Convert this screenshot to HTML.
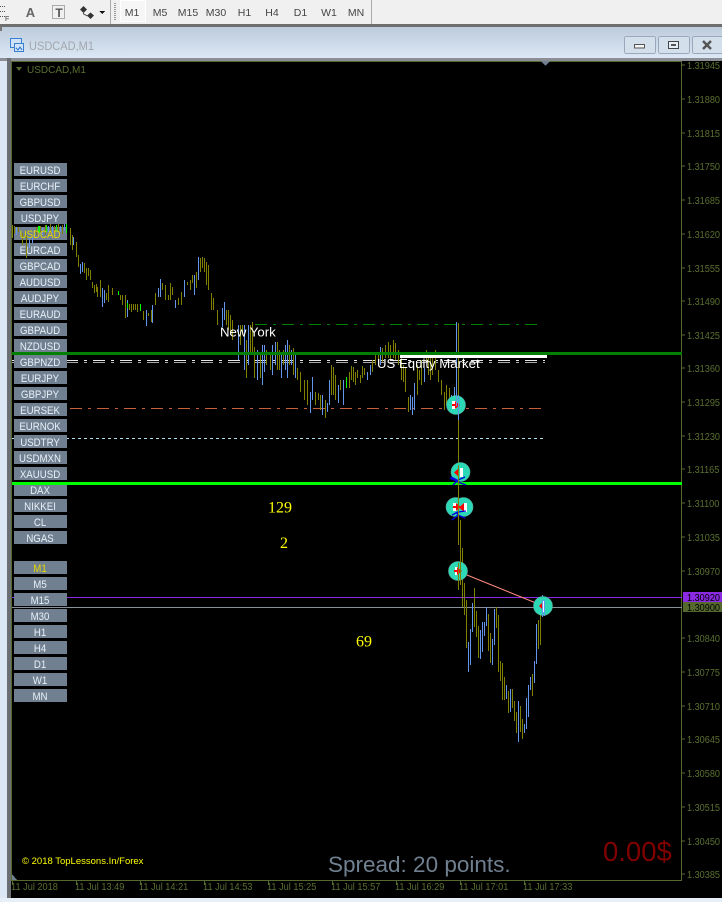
<!DOCTYPE html>
<html><head><meta charset="utf-8"><style>
html,body{margin:0;padding:0;background:#000;width:722px;height:902px;overflow:hidden}
svg{display:block;font-family:"Liberation Sans",sans-serif}
.b text{font-size:11px;fill:#e8f0f8;text-anchor:middle}
.p text{font-size:10.5px;fill:#5a7030}
.t text{font-size:10px;fill:#5a7030}
.tb text{font-size:10.5px;fill:#444;text-anchor:middle}
</style></head><body>
<svg width="722" height="902" viewBox="0 0 722 902" xmlns="http://www.w3.org/2000/svg" shape-rendering="crispEdges">
<defs><linearGradient id="g" x1="0" y1="0" x2="0" y2="1"><stop offset="0" stop-color="#bccbdb"/><stop offset="1" stop-color="#dbe7f4"/></linearGradient></defs>
<rect width="722" height="24" fill="#f0f0f0"/>
<rect y="24" width="722" height="3" fill="#6e6e6e"/>
<rect y="27" width="722" height="31" fill="url(#g)"/>
<rect y="58" width="722" height="844" fill="#dbe7f4"/>
<rect y="58" width="722" height="3" fill="#8b8f95"/>
<rect x="7" y="58" width="4" height="840" fill="#6b6f73"/>
<rect x="11" y="61" width="711" height="837" fill="#000"/>
<rect y="898" width="722" height="4" fill="#e6eef7"/>
<rect x="0" y="27" width="2" height="4" fill="#777"/>

<!-- toolbar -->
<g fill="none" stroke="#555"><path d="M0 6.500H6M0 11.500H6M0 16.500H6" stroke-dasharray="1 1"/></g>
<text x="5" y="21" font-size="7" fill="#444">F</text>
<text x="30.500" y="17" font-size="13" font-weight="bold" fill="#666" text-anchor="middle">A</text>
<rect x="52.500" y="5.500" width="12" height="13" fill="none" stroke="#666" stroke-dasharray="1 1"/>
<text x="59" y="17" font-size="12" font-weight="bold" fill="#555" text-anchor="middle">T</text>
<g shape-rendering="auto"><path d="M80 9.500l3.500-3.500 3.500 3.500-3.500 3.500zM87 15.500l3.500-3 3.500 3-3.500 3.500z" fill="#333"/>
<path d="M83.500 12v2l4 2" stroke="#555" fill="none"/></g>
<path d="M99 11h6l-3 3z" fill="#111"/>
<rect x="110" y="0" width="1" height="24" fill="#aaa"/>
<path d="M115 3v18" stroke="#999" stroke-width="2" stroke-dasharray="1 1"/>
<rect x="120.500" y="0.500" width="25" height="21" fill="#f6f6f6" stroke="#fff"/>
<rect x="371" y="0" width="1" height="24" fill="#aaa"/>
<g class="tb"><text x="132" y="16">M1</text><text x="160" y="16">M5</text><text x="188" y="16">M15</text><text x="216" y="16">M30</text><text x="244.500" y="16">H1</text><text x="272" y="16">H4</text><text x="300.500" y="16">D1</text><text x="329" y="16">W1</text><text x="356" y="16">MN</text></g>

<!-- title -->
<g fill="#cfe2f7" stroke="#3a80d0"><rect x="10.500" y="38.500" width="11" height="9"/><rect x="14.500" y="43.500" width="9" height="8"/></g>
<path d="M16 48l2 2 2-3 2 3" stroke="#3a80d0" fill="none"/>
<text x="29" y="50" font-size="12" fill="#a2a6ad" textLength="65" lengthAdjust="spacingAndGlyphs">USDCAD,M1</text>
<g fill="#d4dfec" stroke="#9aa8bb"><rect x="624.500" y="36.500" width="31" height="17" rx="2"/><rect x="658.500" y="36.500" width="31" height="17" rx="2"/><rect x="692.500" y="36.500" width="40" height="17" rx="2"/></g>
<rect x="634.500" y="44.500" width="10" height="3.500" fill="#f4f4f4" stroke="#555"/>
<rect x="668.500" y="41.500" width="10" height="7" fill="#e8eef5" stroke="#444"/><rect x="671" y="44" width="5" height="2" fill="#555"/>
<g shape-rendering="auto"><path d="M703 41l8 8M711 41l-8 8" stroke="#555" stroke-width="2.500"/></g>

<!-- chart frame -->
<path d="M11.500 61.500H681.500V880.500H11.500Z" fill="#000" stroke="#55692f"/>
<path d="M682 65h3M682 99h3M682 133h3M682 166h3M682 200h3M682 234h3M682 268h3M682 301h3M682 335h3M682 368h3M682 402h3M682 436h3M682 469h3M682 503h3M682 537h3M682 571h3M682 638h3M682 672h3M682 706h3M682 739h3M682 773h3M682 807h3M682 841h3M682 874h3" stroke="#55692f"/>
<path d="M12.500 881v4M76.500 881v4M140.500 881v4M204.500 881v4M268.500 881v4M332.500 881v4M396.500 881v4M460.500 881v4M524.500 881v4" stroke="#55692f"/>
<g class="p" transform="translate(687,0) scale(.87,1)"><text x="0" y="69">1.31945</text><text x="0" y="103">1.31880</text><text x="0" y="137">1.31815</text><text x="0" y="170">1.31750</text><text x="0" y="204">1.31685</text><text x="0" y="238">1.31620</text><text x="0" y="272">1.31555</text><text x="0" y="305">1.31490</text><text x="0" y="339">1.31425</text><text x="0" y="372">1.31360</text><text x="0" y="406">1.31295</text><text x="0" y="440">1.31230</text><text x="0" y="473">1.31165</text><text x="0" y="507">1.31100</text><text x="0" y="541">1.31035</text><text x="0" y="575">1.30970</text><text x="0" y="642">1.30840</text><text x="0" y="676">1.30775</text><text x="0" y="710">1.30710</text><text x="0" y="743">1.30645</text><text x="0" y="777">1.30580</text><text x="0" y="811">1.30515</text><text x="0" y="845">1.30450</text><text x="0" y="878">1.30385</text></g>
<g class="t" transform="scale(.92,1)"><text x="12" y="890">11 Jul 2018</text><text x="81.500" y="890">11 Jul 13:49</text><text x="151" y="890">11 Jul 14:21</text><text x="220.700" y="890">11 Jul 14:53</text><text x="290.200" y="890">11 Jul 15:25</text><text x="359.800" y="890">11 Jul 15:57</text><text x="429.300" y="890">11 Jul 16:29</text><text x="498.900" y="890">11 Jul 17:01</text><text x="568.500" y="890">11 Jul 17:33</text></g>
<path d="M16 67h6l-3 4z" fill="#55692f"/>
<text x="27" y="73" font-size="10" fill="#5a7030">USDCAD,M1</text>
<path d="M541 61h9l-4.500 5z" fill="#708090"/>
<path d="M12 874l5 6h-5z" fill="#708090"/>

<!-- price lines -->
<rect x="12" y="597" width="670" height="1" fill="#8a2be2"/>
<rect x="12" y="607" width="670" height="1" fill="#8a9099"/>

<!-- dashed levels -->
<path d="M255 324.500H540" stroke="#008000" stroke-dasharray="12 6 3 6" fill="none"/>
<path d="M12 360.500H545" stroke="#e8e8e8" stroke-dasharray="12 6 3 6" fill="none"/>
<path d="M12 362.500H545" stroke="#a8a8a8" stroke-dasharray="12 6 3 6" fill="none"/>
<path d="M70 408.500H545" stroke="#c8603a" stroke-dasharray="12 6 3 6" fill="none"/>
<path d="M12 438.500H543" stroke="#b0e0f0" stroke-dasharray="3 3" fill="none"/>

<!-- buttons -->
<g fill="#708090"><rect x="14" y="163" width="53" height="13"/><rect x="14" y="179" width="53" height="13"/><rect x="14" y="195" width="53" height="13"/><rect x="14" y="211" width="53" height="13"/><rect x="14" y="227" width="53" height="13"/><rect x="14" y="243" width="53" height="13"/><rect x="14" y="259" width="53" height="13"/><rect x="14" y="275" width="53" height="13"/><rect x="14" y="291" width="53" height="13"/><rect x="14" y="307" width="53" height="13"/><rect x="14" y="323" width="53" height="13"/><rect x="14" y="339" width="53" height="13"/><rect x="14" y="355" width="53" height="13"/><rect x="14" y="371" width="53" height="13"/><rect x="14" y="387" width="53" height="13"/><rect x="14" y="403" width="53" height="13"/><rect x="14" y="419" width="53" height="13"/><rect x="14" y="435" width="53" height="13"/><rect x="14" y="451" width="53" height="13"/><rect x="14" y="467" width="53" height="13"/><rect x="14" y="483" width="53" height="13"/><rect x="14" y="499" width="53" height="13"/><rect x="14" y="515" width="53" height="13"/><rect x="14" y="531" width="53" height="13"/><rect x="14" y="561" width="53" height="13"/><rect x="14" y="577" width="53" height="13"/><rect x="14" y="593" width="53" height="13"/><rect x="14" y="609" width="53" height="13"/><rect x="14" y="625" width="53" height="13"/><rect x="14" y="641" width="53" height="13"/><rect x="14" y="657" width="53" height="13"/><rect x="14" y="673" width="53" height="13"/><rect x="14" y="689" width="53" height="13"/></g>
<g class="b" transform="scale(.88,1)"><text x="45.500" y="174">EURUSD</text><text x="45.500" y="190">EURCHF</text><text x="45.500" y="206">GBPUSD</text><text x="45.500" y="222">USDJPY</text><text x="45.500" y="254">EURCAD</text><text x="45.500" y="270">GBPCAD</text><text x="45.500" y="286">AUDUSD</text><text x="45.500" y="302">AUDJPY</text><text x="45.500" y="318">EURAUD</text><text x="45.500" y="334">GBPAUD</text><text x="45.500" y="350">NZDUSD</text><text x="45.500" y="366">GBPNZD</text><text x="45.500" y="382">EURJPY</text><text x="45.500" y="398">GBPJPY</text><text x="45.500" y="414">EURSEK</text><text x="45.500" y="430">EURNOK</text><text x="45.500" y="446">USDTRY</text><text x="45.500" y="462">USDMXN</text><text x="45.500" y="478">XAUUSD</text><text x="45.500" y="494">DAX</text><text x="45.500" y="510">NIKKEI</text><text x="45.500" y="526">CL</text><text x="45.500" y="542">NGAS</text><text x="45.500" y="588">M5</text><text x="45.500" y="604">M15</text><text x="45.500" y="620">M30</text><text x="45.500" y="636">H1</text><text x="45.500" y="652">H4</text><text x="45.500" y="668">D1</text><text x="45.500" y="684">W1</text><text x="45.500" y="700">MN</text></g>
<g transform="scale(.88,1)" font-size="11" fill="#e8d800" text-anchor="middle"><text x="45.500" y="572">M1</text></g>

<!-- bars -->
<path fill="none" stroke="#808000" d="M12.500 225V238M14.500 226V233M18.500 227V232M22.500 233V245M26.500 235V258M36.500 227V235M40.500 226V232M45.500 225V235M50.500 224V233M54.500 226V232M58.500 224V232M62.500 225V234M70.500 228V245M72.500 235V250M76.500 242V257M78.500 255V267M84.500 263V273M86.500 268V280M88.500 268V276M90.500 270V280M92.500 282V288M94.500 285V293M96.500 284V292M97.500 287V297M100.500 280V297M106.500 293V300M108.500 285V302M112.500 288V295M120.500 295V300M122.500 295V305M125.500 295V318M129.500 304V310M131.500 304V312M133.500 304V310M135.500 304V310M137.500 304V312M143.500 311V320M148.500 313V316M151.500 310V322M155.500 293V305M162.500 283V290M165.500 285V300M168.500 295V300M170.500 283V300M172.500 287V295M178.500 298V305M181.500 292V305M187.500 282V285M190.500 280V290M192.500 275V283M196.500 272V288M200.500 258V272M202.500 257V268M204.500 258V272M206.500 262V285M208.500 265V290M211.500 293V310M213.500 298V310M217.500 310V325M226.500 310V325M228.500 310V330M230.500 315V335M232.500 320V340M240.500 325V345M242.500 325V335M246.500 340V378M250.500 325V355M252.500 322V355M254.500 347V378M260.500 355V378M266.500 350V365M270.500 352V370M277.500 342V370M279.500 350V370M283.500 350V365M289.500 345V365M293.500 348V375M297.500 368V380M300.500 372V392M304.500 380V400M307.500 380V405M315.500 392V405M318.500 393V400M320.500 395V410M325.500 400V418M331.500 365V395M333.500 367V395M335.500 375V400M340.500 380V390M349.500 372V388M351.500 366V380M353.500 367V382M355.500 372V385M357.500 370V378M360.500 375V383M362.500 366V378M364.500 368V375M372.500 360V372M375.500 352V365M378.500 352V362M382.500 348V362M385.500 345V358M388.500 342V358M390.500 345V360M393.500 340V358M395.500 343V360M398.500 350V365M401.500 355V380M403.500 365V382M405.500 367V392M408.500 397V412M417.500 365V395M419.500 370V380M421.500 360V385M426.500 350V362M428.500 355V375M430.500 352V380M432.500 355V375M435.500 350V370M438.500 370V382M441.500 380V395M444.500 392V410M446.500 385V405M449.500 388V412M458.500 323V545M460.500 520V585M462.500 548V607M464.500 583V615M466.500 600V648M474.500 588V627M476.500 611V637M478.500 626V658M488.500 614V651M490.500 633V663M496.500 607V628M498.500 615V672M500.500 661V681M502.500 663V700M504.500 677V700M508.500 691V713M512.500 689V708M514.500 701V721M516.500 712V733M520.500 706V732M522.500 719V739M532.500 674V696M538.500 620V649M540.500 600V645"/>
<path fill="none" stroke="#6495ed" d="M16.500 227V235M29.500 238V248M32.500 237V243M34.500 230V238M42.500 228V235M48.500 226V232M52.500 226V233M60.500 226V232M64.500 224V231M73.500 237V245M80.500 264V274M82.500 262V272M102.500 288V307M104.500 290V303M127.500 300V317M146.500 310V326M152.500 305V323M158.500 288V297M160.500 279V297M175.500 300V308M184.500 280V297M194.500 275V295M198.500 257V280M222.500 308V327M224.500 302V320M238.500 325V360M244.500 325V370M248.500 325V365M257.500 350V380M262.500 345V385M264.500 345V372M272.500 345V375M275.500 342V365M281.500 352V378M285.500 345V370M287.500 340V378M291.500 350V365M295.500 355V378M310.500 392V413M312.500 377V400M322.500 395V415M327.500 403V412M329.500 380V405M338.500 385V403M343.500 380V405M367.500 372V380M370.500 365V375M380.500 347V365M410.500 395V410M412.500 397V415M414.500 383V410M424.500 368V382M451.500 395V405M454.500 387V400M456.500 322V405M468.500 642V672M470.500 629V665M472.500 603V632M480.500 630V659M482.500 622V652M484.500 622V636M486.500 607V626M492.500 639V665M494.500 609V645M506.500 685V699M510.500 689V712M518.500 701V742M524.500 724V733M526.500 698V729M528.500 685V717M530.500 677V690M534.500 661V683M536.500 624V664M542.500 595V617M544.500 600V616"/>
<path fill="none" stroke="#00ff00" d="M38.500 226V232M39.500 226V233M46.500 225V232M56.500 225V232M66.500 224V233M118.500 291V295M127.500 303V308M140.500 304V311M346.500 377V388"/>
<g transform="scale(.88,1)" font-size="11" fill="#e8d800" text-anchor="middle"><text x="45.500" y="238">USDCAD</text></g>

<!-- heavy lines -->
<rect x="12" y="352" width="670" height="3" fill="#008000"/>
<rect x="12" y="482" width="670" height="3" fill="#00ff00"/>
<rect x="400" y="355" width="147" height="3" fill="#fff"/>

<!-- session text -->
<text x="220" y="336.500" font-size="13.200" fill="#fff">New York</text>
<text x="377" y="368" font-size="13.200" fill="#fff">US Equity Market</text>
<g font-family="Liberation Serif,serif" font-size="16" fill="#ffff00"><text x="268" y="512.500">129</text><text x="280" y="548">2</text><text x="356" y="646.500">69</text></g>
<text x="22" y="864" font-size="9.500" fill="#ffff00">© 2018 TopLessons.In/Forex</text>
<text x="328" y="872" font-size="22.500" fill="#708090">Spread: 20 points.</text>
<text x="603" y="861" font-size="27.500" fill="#800000">0.00$</text>

<!-- markers -->
<g shape-rendering="auto">
<path d="M462 573L536 603" stroke="#ff8a80" fill="none"/>
<g fill="#2bd9b6" stroke="#5aa89a" stroke-width=".6"><circle cx="456" cy="405" r="9.500"/><circle cx="460.500" cy="472" r="9.500"/><circle cx="455.500" cy="507" r="9.500"/><circle cx="463.500" cy="507" r="9.500"/><circle cx="458" cy="571" r="9.500"/><circle cx="543" cy="606" r="9.500"/></g>
<g fill="#fff"><rect x="452" y="401" width="4" height="8"/><rect x="453" y="503" width="4" height="8"/><rect x="455" y="567" width="4" height="8"/><rect x="460" y="468" width="3" height="9"/><rect x="464" y="503" width="3" height="9"/><rect x="543" y="601" width="2" height="11"/></g>
<g fill="#f00"><path d="M452 404h3v-3l5 4-5 4v-3h-3z"/><path d="M453 506h3v-3l5 4-5 4v-3h-3z"/><path d="M454 570h3v-3l5 4-5 4v-3h-3z"/><path d="M459 468v9l-5-4.500z"/><path d="M464 503v9l-5-4.500z"/><path d="M542 603v6l-3-3z"/></g>
<g stroke="#0000e0" stroke-width="1.300" fill="none"><path d="M450 478l8 4 8 3M453 485l5-5 7-3M451 477l6 3"/><path d="M452 515l6-3 8-1M452 520l6-5 7 3M456 512l3 4"/></g>
<path d="M458.500 465V520M460.500 520V545" stroke="#808000" fill="none"/>
<path d="M456.500 395V406M458.500 395V420" stroke="#6495ed" fill="none"/>
<path d="M458.500 563V590M460.500 560V585" stroke="#808000" fill="none"/>
<path d="M542.500 600V617M544.500 600V616" stroke="#6495ed" fill="none"/>
</g>

<!-- price tags -->
<rect x="683" y="592" width="39" height="10" fill="#8a2be2"/>
<rect x="683" y="602" width="39" height="10" fill="#55692f"/>
<g font-size="10.500" fill="#000" transform="translate(687,0) scale(.87,1)"><text x="0" y="601">1.30920</text><text x="0" y="611">1.30900</text></g>
</svg>
</body></html>
